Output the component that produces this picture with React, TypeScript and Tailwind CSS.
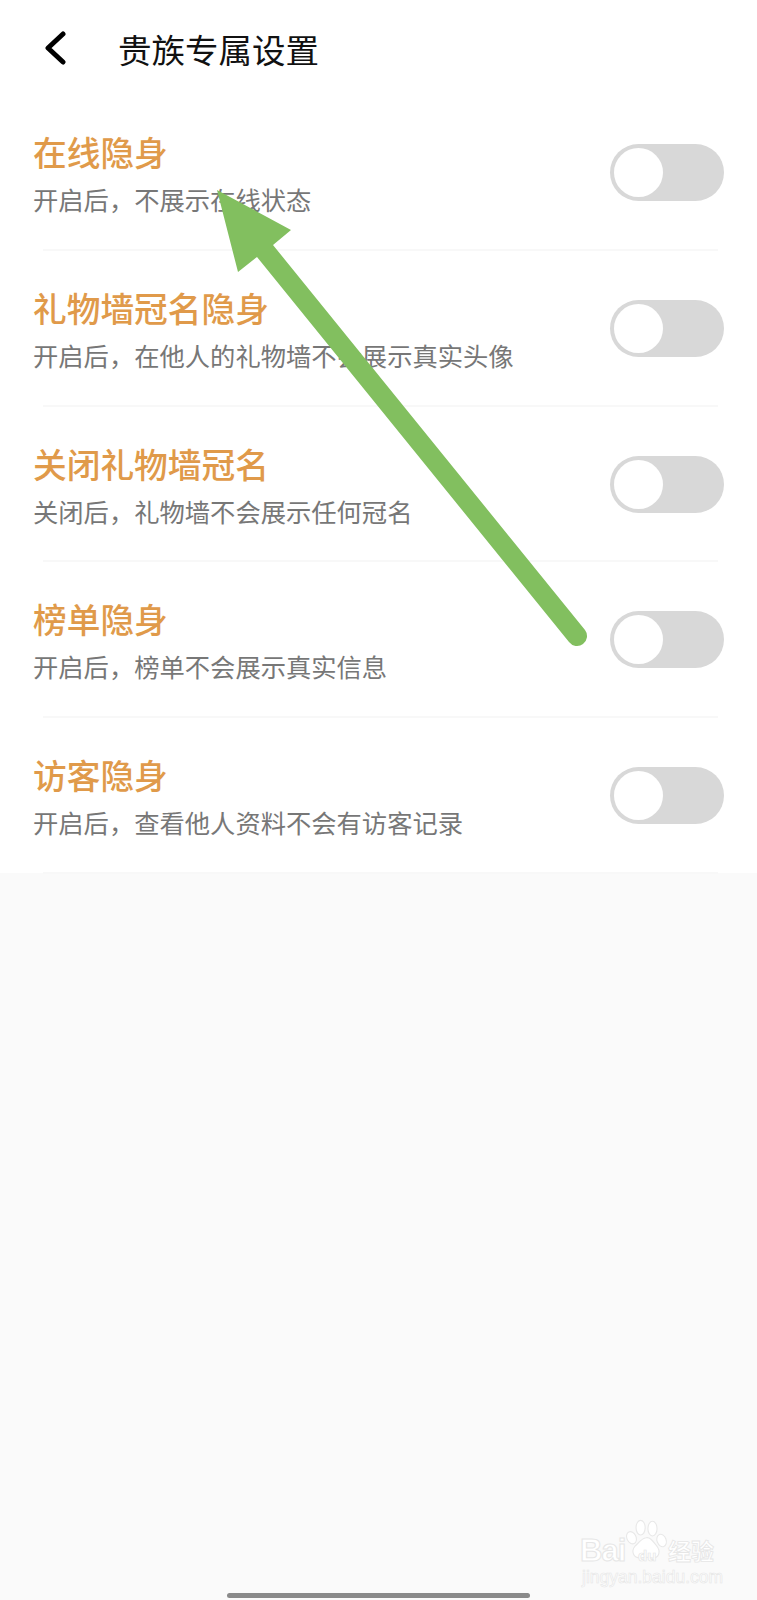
const rows = [
  { title: "在线隐身", desc: "开启后，不展示在线状态" },
  { title: "礼物墙冠名隐身", desc: "开启后，在他人的礼物墙不会展示真实头像" },
  { title: "关闭礼物墙冠名", desc: "关闭后，礼物墙不会展示任何冠名" },
  { title: "榜单隐身", desc: "开启后，榜单不会展示真实信息" },
  { title: "访客隐身", desc: "开启后，查看他人资料不会有访客记录" },
];

function Toggle() {
  return (
    <div className="flex h-[57px] w-[114px] items-center rounded-full bg-[#d8d8d8] pl-1">
      <div className="h-[49px] w-[49px] rounded-full bg-white" />
    </div>
  );
}

function Row({ title, desc }: { title: string; desc: string }) {
  return (
    <div className="relative flex h-[155.75px] items-start justify-between pl-[33px] pr-[33px]">
      <div className="flex flex-col pt-[35px]">
        <div className="text-[33.7px] leading-[46px] font-medium text-[#e09a4a]">{title}</div>
        <div className="mt-[6px] text-[25.3px] leading-[36px] text-[#777777]">{desc}</div>
      </div>
      <div className="pt-[50px]">
        <Toggle />
      </div>
      <div className="absolute -bottom-px left-[43px] right-[39px] h-[2px] bg-[#f8f8f8]" />
    </div>
  );
}

function Watermark() {
  return (
    <div className="absolute left-[580px] top-[1515px] h-[70px] w-[140px]">
      <svg className="absolute left-[46px] top-[2px]" width="42" height="47" viewBox="0 0 46 46" fill="#ffffff" stroke="#e8e8e8" strokeWidth="1.2">
        <ellipse cx="16" cy="9" rx="5" ry="8" />
        <ellipse cx="29" cy="10" rx="5" ry="8" />
        <ellipse cx="6" cy="20" rx="5" ry="7" transform="rotate(-25 6 20)" />
        <ellipse cx="39" cy="23" rx="5" ry="7" transform="rotate(-20 39 23)" />
        <path d="M22 20c4-1 7 3 11 8 6 7 3 15-5 14-4-1-7-1-11 0-9 1-12-7-7-13 4-3 6-8 12-9z" />
      </svg>
      <div className="absolute left-0 top-[18px] font-['Liberation_Sans',sans-serif] text-[31px] leading-[36px] font-bold tracking-[-1px] text-white [-webkit-text-stroke:1px_#e6e6e6]">
        Bai
      </div>
      <div className="absolute left-[58px] top-[32px] font-['Liberation_Sans',sans-serif] text-[15px] leading-[18px] font-bold text-white [-webkit-text-stroke:0.7px_#e6e6e6]">
        du
      </div>
      <div className="absolute left-[88px] top-[20px] text-[23px] leading-[30px] font-bold whitespace-nowrap text-white [-webkit-text-stroke:0.8px_#e6e6e6]">
        经验
      </div>
      <div className="absolute left-[2px] top-[52px] font-['Liberation_Sans',sans-serif] text-[17.5px] leading-[20px] whitespace-nowrap text-white [-webkit-text-stroke:0.6px_#e6e6e6]">
        jingyan.baidu.com
      </div>
    </div>
  );
}

export default function App() {
  return (
    <div className="relative flex h-[1600px] w-[757px] flex-col overflow-hidden bg-[#fafafa] font-['Noto_Sans_CJK_SC','Noto_Sans',sans-serif]">
      <div className="bg-white">
        <div className="flex h-[94px] items-start">
          <div className="pl-[45px] pt-[31px]">
            <svg width="22" height="34" viewBox="0 0 22 34" fill="none" stroke="#000000" strokeWidth="5" strokeLinecap="round" strokeLinejoin="round">
              <path d="M18 3 L3 17 L18 31" />
            </svg>
          </div>
          <div className="pl-[51px] pt-[25px] text-[33.5px] leading-[48px] text-[#111111]">贵族专属设置</div>
        </div>
        {rows.map((r) => (
          <Row key={r.title} title={r.title} desc={r.desc} />
        ))}
      </div>

      {/* annotation arrow over the list */}
      <svg className="absolute left-0 top-0" width="757" height="700" viewBox="0 0 757 700" fill="#82bf5f">
        <path d="M217 190 L291 230 L273 245 L585 630 A10 10 0 0 1 569 642 L257 257 L238 272 Z" />
      </svg>

      <Watermark />

      <div className="absolute bottom-[2px] left-[227px] h-[5px] w-[303px] rounded-full bg-[#8a8a8a]" />
    </div>
  );
}
